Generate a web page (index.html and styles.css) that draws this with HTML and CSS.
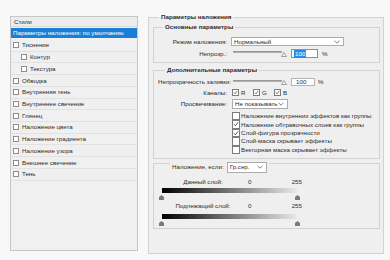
FILE: index.html
```html
<!DOCTYPE html>
<html lang="ru">
<head>
    <meta charset="UTF-8">
    <title>Стиль слоя</title>
    <link rel="stylesheet" href="styles.css">
</head>
<body>

<div class="window">
    <!-- list of effects -->
    <div class="styles-panel">
        <div class="panel-head">Стили</div>
        <div class="preset">Параметры наложения: по умолчанию</div>
        <ul class="effects">
            <li><span class="box"></span>Тиснение</li>
            <li class="sub"><span class="box"></span>Контур</li>
            <li class="sub"><span class="box"></span>Текстура</li>
            <li><span class="box"></span>Обводка</li>
            <li><span class="box"></span>Внутренняя тень</li>
            <li><span class="box"></span>Внутреннее свечение</li>
            <li><span class="box"></span>Глянец</li>
            <li><span class="box"></span>Наложение цвета</li>
            <li><span class="box"></span>Наложение градиента</li>
            <li><span class="box"></span>Наложение узора</li>
            <li><span class="box"></span>Внешнее свечение</li>
            <li><span class="box"></span>Тень</li>
        </ul>
    </div>

    <fieldset class="blend">
        <legend>Параметры наложения</legend>

        <fieldset class="group basic">
            <legend>Основные параметры</legend>
            <div class="row row-mode">
                <span class="caption">Режим наложения:</span>
                <div class="select select-mode">Нормальный
                    <svg class="chev" viewBox="0 0 6 4"><path d="M0.5 0.8 L3 3.2 L5.5 0.8"/></svg>
                </div>
            </div>
            <div class="row row-opacity">
                <span class="caption">Непрозр.:</span>
                <div class="slider">
                    <span class="track"></span>
                    <svg class="thumb" viewBox="0 0 6 5"><path d="M3 0.5 L5.5 4.5 L0.5 4.5 Z"/></svg>
                </div>
                <span class="field focused"><span class="sel">100</span></span>
                <span class="unit">%</span>
            </div>
        </fieldset>

        <fieldset class="group extra">
            <legend>Дополнительные параметры</legend>
            <div class="row row-fill">
                <span class="caption">Непрозрачность заливки:</span>
                <div class="slider">
                    <span class="track"></span>
                    <svg class="thumb" viewBox="0 0 6 5"><path d="M3 0.5 L5.5 4.5 L0.5 4.5 Z"/></svg>
                </div>
                <span class="field field-fill">100</span>
                <span class="unit unit-fill">%</span>
            </div>
            <div class="row row-channels">
                <span class="caption caption-near">Каналы:</span>
                <span class="channel"><span class="check"><svg viewBox="0 0 8 8"><path d="M1.3 4 L3.2 6.2 L6.8 1.3"/></svg></span>R</span>
                <span class="channel"><span class="check"><svg viewBox="0 0 8 8"><path d="M1.3 4 L3.2 6.2 L6.8 1.3"/></svg></span>G</span>
                <span class="channel"><span class="check"><svg viewBox="0 0 8 8"><path d="M1.3 4 L3.2 6.2 L6.8 1.3"/></svg></span>B</span>
            </div>
            <div class="row row-knockout">
                <span class="caption caption-near">Просвечивание:</span>
                <div class="select select-knockout">Не показывать
                    <svg class="chev" viewBox="0 0 6 4"><path d="M0.5 0.8 L3 3.2 L5.5 0.8"/></svg>
                </div>
            </div>
            <ul class="options">
                <li><span class="check"></span>Наложение внутренних эффектов как группы</li>
                <li><span class="check"><svg viewBox="0 0 8 8"><path d="M1.3 4 L3.2 6.2 L6.8 1.3"/></svg></span>Наложение обтравочных слоев как группы</li>
                <li><span class="check"><svg viewBox="0 0 8 8"><path d="M1.3 4 L3.2 6.2 L6.8 1.3"/></svg></span>Слой-фигура прозрачности</li>
                <li><span class="check"></span>Слой-маска скрывает эффекты</li>
                <li><span class="check"></span>Векторная маска скрывает эффекты</li>
            </ul>
        </fieldset>

        <div class="blend-if">
            <div class="blend-if-head">
                <span>Наложение, если:</span>
                <div class="select select-gray">Гр.сер.
                    <svg class="chev" viewBox="0 0 6 4"><path d="M0.5 0.8 L3 3.2 L5.5 0.8"/></svg>
                </div>
            </div>
            <div class="ranges">
                <div class="range-label"><span class="range-name">Данный слой:</span><span class="range-min">0</span><span class="range-max">255</span></div>
                <div class="ramp"></div>
                <div class="stops">
                    <svg viewBox="0 0 5 5"><path d="M2.5 0 L5 2 L5 5 L0 5 L0 2 Z"/></svg>
                    <svg viewBox="0 0 5 5"><path d="M2.5 0 L5 2 L5 5 L0 5 L0 2 Z"/></svg>
                </div>
                <div class="range-label second"><span class="range-name">Подлежащий слой:</span><span class="range-min">0</span><span class="range-max">255</span></div>
                <div class="ramp ramp-under"></div>
                <div class="stops">
                    <svg viewBox="0 0 5 5"><path d="M2.5 0 L5 2 L5 5 L0 5 L0 2 Z"/></svg>
                    <svg viewBox="0 0 5 5"><path d="M2.5 0 L5 2 L5 5 L0 5 L0 2 Z"/></svg>
                </div>
            </div>
        </div>
    </fieldset>
</div>

</body>
</html>
```

FILE: styles.css
```css
body, html {
    margin: 0;
    padding: 0;
    width: 390px;
    height: 260px;
    overflow: hidden;
    background-color: #f8f8f8;
}

body {
    font: 6.2px/8px "Liberation Sans", Arial, sans-serif;
    color: #2c2c2c;
}

.window {
    display: flex;
    align-items: flex-start;
    gap: 10px;
    padding: 13px 0 0 10px;
}

/* left column */

.styles-panel {
    width: 128px;
    height: 235px;
    margin-top: 3px;
    box-sizing: border-box;
    border: 1px solid #c6c6c6;
    background-color: #f0f0f0;
}

.panel-head {
    height: 10px;
    box-sizing: border-box;
    padding-left: 3px;
    line-height: 9px;
    border-bottom: 1px solid #dadada;
    background-color: #ececec;
}

.preset {
    height: 10px;
    margin-top: 1px;
    padding-left: 2px;
    line-height: 10px;
    color: #ffffff;
    background-color: #1a7fd6;
}

.effects {
    list-style: none;
    margin: 2px 0 0;
    padding: 0;
}

.effects li {
    display: flex;
    align-items: center;
    height: 11.73px;
    box-sizing: border-box;
    border-bottom: 1px solid #e2e2e2;
}

.effects .box {
    width: 6px;
    height: 6px;
    margin: 0 3px 0 2px;
    box-sizing: border-box;
    border: 1px solid #8e8e8e;
    background-color: #ffffff;
}

.effects .sub .box {
    margin-left: 10px;
}

/* right column */

.blend {
    width: 236px;
    height: 241px;
    margin: 0;
    padding: 0 3px 0 4px;
    box-sizing: border-box;
    min-width: 0;
    border: 1px solid #d2d2d2;
    background-color: #efefef;
}

.blend > legend {
    margin-left: 6px;
    padding: 0 2px;
    line-height: 8px;
    font-weight: bold;
}

.group {
    margin: 2px 0 0;
    padding: 0 4px 4px;
    min-width: 0;
    border: 1px solid #d2d2d2;
}

.group > legend {
    margin-left: 5px;
    padding: 0 2px;
    line-height: 8px;
    font-weight: bold;
}

.extra {
    margin-top: 3px;
}

.extra > legend {
    margin-left: 7px;
}

.row {
    display: flex;
    align-items: center;
}

.caption {
    width: 69px;
    margin-right: 4px;
    text-align: right;
    white-space: nowrap;
}

.caption-near {
    margin-right: 5px;
}

.row-mode {
    height: 9px;
    margin-top: 6px;
}

.row-opacity {
    height: 9px;
    margin-top: 3px;
}

.row-opacity .caption,
.row-fill .caption {
    margin-right: 6px;
}

.select {
    display: flex;
    align-items: center;
    justify-content: space-between;
    height: 100%;
    padding: 0 3px 0 2px;
    box-sizing: border-box;
    border: 1px solid #acacac;
    background-color: #ffffff;
}

.select-mode {
    width: 113px;
}

.select-knockout {
    width: 56px;
}

.chev {
    width: 6px;
    height: 4px;
    fill: none;
    stroke: #606060;
    stroke-width: 0.8;
}

.slider {
    display: flex;
    align-items: center;
    position: relative;
    width: 54px;
    height: 100%;
    margin-right: 4px;
}

.track {
    width: 49px;
    height: 2px;
    margin-top: -3px;
    background: linear-gradient(#8c8c8c, #bdbdbd);
}

.thumb {
    position: absolute;
    right: 0;
    bottom: 1px;
    width: 6px;
    height: 5px;
    fill: #f4f4f4;
    stroke: #8a8a8a;
    stroke-width: 0.8;
}

.field {
    display: flex;
    align-items: center;
    width: 27px;
    height: 100%;
    padding-left: 2px;
    box-sizing: border-box;
    border: 1px solid #b4b4b4;
    background-color: #ffffff;
}

.field.focused {
    border-color: #5c9bd9;
}

.sel {
    padding: 0 1px;
    color: #ffffff;
    background-color: #2f8ae6;
}

.unit {
    margin-left: 4px;
}

.row-fill {
    height: 8px;
    margin-top: 4px;
}

.field-fill {
    width: 24px;
    padding-left: 4px;
}

.unit-fill {
    margin-left: 3px;
}

.row-channels {
    height: 9px;
    margin-top: 2px;
}

.channel {
    display: flex;
    align-items: center;
    width: 21px;
}

.check {
    display: flex;
    width: 7px;
    height: 7px;
    margin-right: 2px;
    box-sizing: border-box;
    border: 1px solid #7c7c7c;
    background-color: #ffffff;
}

.check svg {
    width: 100%;
    height: 100%;
    fill: none;
    stroke: #333333;
    stroke-width: 1;
}

.row-knockout {
    height: 10px;
    margin-top: 2px;
}

.options {
    list-style: none;
    margin: 3px 0 0 74px;
    padding: 0;
}

.options li {
    display: flex;
    align-items: center;
    height: 8.4px;
    white-space: nowrap;
}

.options .check {
    width: 8px;
    height: 8.4px;
    margin-right: 1px;
}

/* blend if */

.blend-if {
    margin-top: 4px;
    padding-bottom: 2px;
    border: 1px solid #d2d2d2;
}

.blend-if-head {
    display: flex;
    align-items: center;
    width: fit-content;
    height: 11px;
    margin: -2px 0 0 16px;
    padding: 0 2px;
    background-color: #efefef;
}

.select-gray {
    width: 40px;
    margin-left: 3px;
}

.ranges {
    padding-left: 8px;
}

.range-label {
    display: flex;
    width: 140px;
    height: 8px;
    margin-top: 5px;
}

.range-label.second {
    margin-top: 2px;
}

.range-name {
    width: 82px;
    text-align: center;
}

.range-min {
    margin-left: 4px;
}

.range-max {
    margin-left: auto;
}

.ramp {
    width: 135px;
    height: 5px;
    margin-top: 2px;
    background: linear-gradient(to right, #000000, #6a6a6a 45%, #e8e8e8);
}

.ramp-under {
    margin-top: 4px;
}

.stops {
    display: flex;
    justify-content: space-between;
    width: 141px;
    height: 5px;
    margin: 2px 0 0 -3px;
}

.stops svg {
    width: 5px;
    height: 5px;
    fill: #7a7a7a;
}
```
